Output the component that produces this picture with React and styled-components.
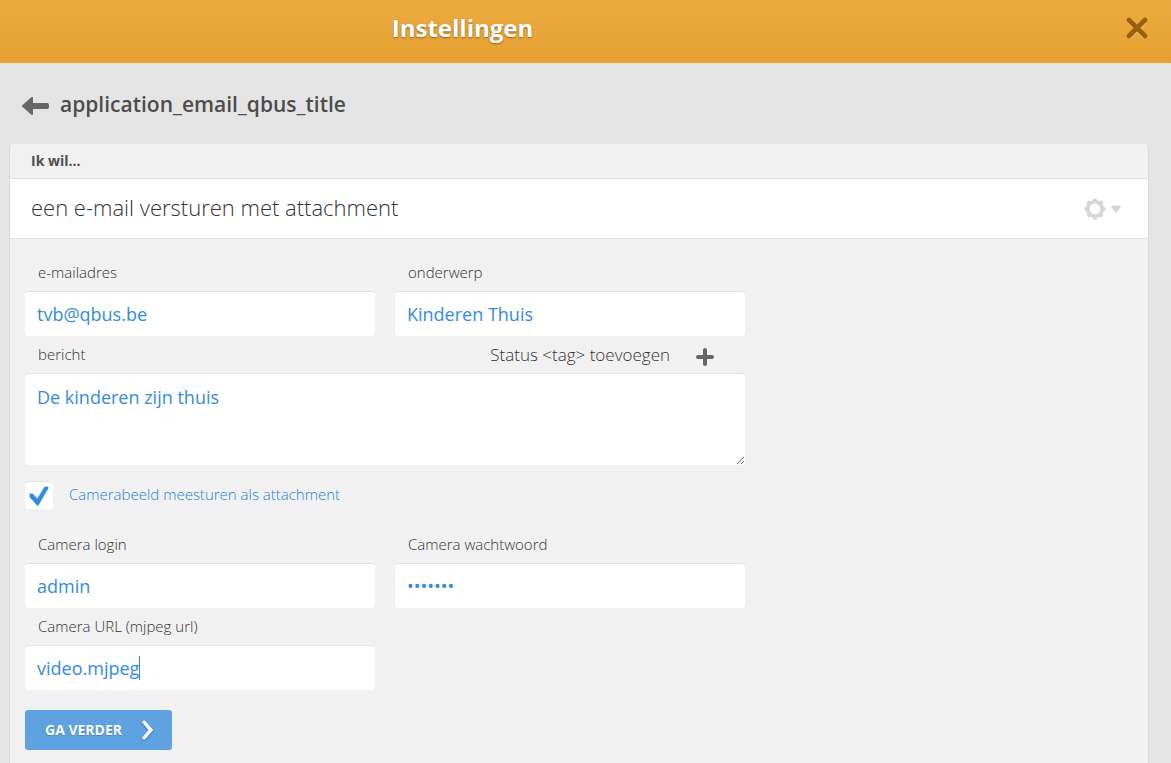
import React, { useState } from "react";
import styled, { createGlobalStyle } from "styled-components";

const GlobalStyle = createGlobalStyle`
  * {
    box-sizing: border-box;
  }

  body {
    margin: 0;
    background: #e4e4e4;
    color: #4d4d4d;
    font-family: "Open Sans", "Noto Sans", sans-serif;
    font-size: 14px;
  }

  button, input, textarea {
    font-family: inherit;
  }
`;

const Page = styled.div`
  display: flex;
  flex-direction: column;
  min-height: 100vh;
`;

const Header = styled.header`
  display: flex;
  align-items: center;
  height: 63px;
  padding-bottom: 8px;
  background: linear-gradient(#ebab42, #e6a02f);
`;

const HeaderTitle = styled.h1`
  flex: 1;
  margin: 0;
  color: #fff;
  font-size: 24px;
  font-weight: 700;
  line-height: 32px;
  text-align: center;
  text-shadow: 0 1px 2px rgba(0, 0, 0, 0.4);
`;

const HeaderActions = styled.div`
  display: flex;
  justify-content: flex-end;
  width: 21%;
  padding-right: 23px;
`;

const IconButton = styled.button`
  display: flex;
  align-items: center;
  gap: ${(props) => props.$gap || "0"};
  padding: 0;
  border: 0;
  background: none;
  color: ${(props) => props.$color || "#666"};
  cursor: pointer;
`;

const TitleBar = styled.div`
  display: flex;
  align-items: center;
  gap: 11px;
  height: 81px;
  padding: 4px 21px 0;
`;

const PageTitle = styled.h2`
  margin: 0;
  padding-bottom: 4px;
  font-size: 21px;
  font-weight: 600;
  line-height: 28px;
`;

const Panel = styled.main`
  flex: 1;
  margin: 0 22px 0 9px;
  border: 1px solid #dadada;
  border-width: 0 1px;
  border-radius: 4px 4px 0 0;
  background: #f1f1f1;
`;

const PanelCaption = styled.div`
  height: 35px;
  padding: 0 21px;
  border-bottom: 1px solid #e0e0e0;
  font-weight: 700;
  line-height: 34px;
`;

const PanelHeading = styled.div`
  display: flex;
  align-items: center;
  justify-content: space-between;
  height: 60px;
  padding: 0 27px 0 21px;
  border-bottom: 1px solid #e0e0e0;
  background: #fff;
`;

const ActionName = styled.h3`
  margin: 0;
  padding-bottom: 4px;
  color: #333;
  font-size: 22px;
  font-weight: 300;
  line-height: 30px;
`;

const Form = styled.form`
  max-width: 750px;
  padding: 15px;
`;

const FieldGrid = styled.div`
  display: grid;
  grid-template-columns: 1fr 1fr;
  column-gap: 20px;
`;

const LabelRow = styled.div`
  display: flex;
  align-items: center;
  justify-content: space-between;
  height: 37px;
  padding: 0 31px 0 13px;
`;

const Label = styled.label`
  padding-bottom: 2px;
  color: #333;
  font-size: 15px;
  font-weight: 300;
  line-height: 20px;
`;

const TagButton = styled(IconButton)`
  color: #333;
  font-size: 17px;
  font-weight: 300;
  line-height: 22px;
`;

const Control = styled.div`
  display: flex;
  align-items: center;
  height: 45px;
  padding: 0 12px;
  border-top: 1px solid #e2e2e2;
  border-radius: 4px;
  background: #fff;
`;

const Input = styled.input`
  flex: ${(props) => (props.$fit ? "none" : "1")};
  field-sizing: ${(props) => (props.$fit ? "content" : "fixed")};
  min-width: 0;
  padding: 0;
  border: 0;
  outline: 0;
  background: none;
  color: #338be0;
  caret-color: ${(props) => (props.$fit ? "transparent" : "auto")};
  font-size: 18px;
  line-height: 26px;
`;

const Caret = styled.span`
  width: 1px;
  height: 24px;
  background: #338be0;
`;

const TextArea = styled.textarea`
  display: block;
  width: 100%;
  height: 92px;
  padding: 10px 12px;
  border: 0;
  border-top: 1px solid #e2e2e2;
  border-radius: 4px;
  outline: 0;
  background: #fff;
  color: #338be0;
  font-size: 18px;
  line-height: 26px;
  resize: both;
`;

const CheckRow = styled.div`
  display: flex;
  align-items: center;
  gap: 16px;
  margin: 16px 0 17px;
`;

const CheckLabel = styled(Label)`
  color: #1f7edb;
`;

const CheckBox = styled.input`
  appearance: none;
  width: 28px;
  height: 28px;
  margin: 0;
  border-top: 1px solid #e2e2e2;
  border-radius: 4px;
  background: #fff;
`;

const CheckFrame = styled.span`
  display: grid;

  > * {
    grid-area: 1 / 1;
    place-self: center;
  }

  svg {
    pointer-events: none;
  }
`;

const SubmitButton = styled.button`
  display: flex;
  align-items: center;
  gap: 19px;
  height: 40px;
  margin-top: 20px;
  padding: 0 19px 2px 20px;
  border: 0;
  border-radius: 3px;
  background: #5fa2e2;
  color: #fff;
  font-size: 14px;
  font-weight: 700;
  text-shadow: 0 1px 1px rgba(0, 0, 0, 0.2);
  cursor: pointer;

  svg {
    filter: drop-shadow(0 1px 1px rgba(0, 0, 0, 0.3));
  }
`;

const CloseIcon = () => (
  <svg width="22" height="22" viewBox="0 0 22 22" fill="none" strokeWidth="4.6">
    <path d="M3 4l16 16M19 4L3 20" stroke="#f3c67c" />
    <path d="M3 3l16 16M19 3l-16 16" stroke="#965f08" strokeLinecap="round" />
  </svg>
);

const BackIcon = () => (
  <svg width="28" height="20" viewBox="0 0 28 20" fill="currentColor">
    <path d="M.6 10L10 1.500q2-1.200 2 .8V7h14q2 0 2 2v2q0 2-2 2H12v4.700q0 2-2 .8z" />
  </svg>
);

// ring with eight short teeth
const GearIcon = () => (
  <svg width="22" height="22" viewBox="0 0 22 22">
    <circle cx="11" cy="11" r="7.200" fill="none" stroke="currentColor" strokeWidth="3.600" />
    {[0, 45, 90, 135, 180, 225, 270, 315].map((angle) => (
      <path
        key={angle}
        d="M8.300 3.500L9.600.5h2.800l1.300 3z"
        fill="currentColor"
        transform={`rotate(${angle} 11 11)`}
      />
    ))}
  </svg>
);

const DropIcon = () => (
  <svg width="10" height="8" viewBox="0 0 10 8" fill="currentColor">
    <path d="M1.500.5h7q1.500.2 1 2L6 7q-1 1-2 0L.5 2.500q-.5-1.800 1-2z" />
  </svg>
);

const PlusIcon = () => (
  <svg width="18" height="22" viewBox="0 0 18 22" fill="none" stroke="#666" strokeWidth="4" strokeLinecap="round">
    <path d="M9 6v14M2 13h14" />
  </svg>
);

const CheckIcon = () => (
  <svg width="20" height="22" viewBox="0 -2 20 22" fill="#338be0">
    <path d="M.5 8.500Q.5 7.500 1.500 7.500H3.500L8.300 12.500 15.200 1.200Q15.800.4 17 .4H18.500Q20 .8 19.400 2.300L10 18.500 9 20 7.500 18.800.5 11z" />
  </svg>
);

const NextIcon = () => (
  <svg width="12" height="22" viewBox="0 -2 12 22" fill="none" stroke="#fff" strokeWidth="3.400">
    <path d="M3 2.200L10 10l-7 7.800" strokeLinecap="round" />
  </svg>
);

function Field({ id, label, type = "text", focused, defaultValue }) {
  return (
    <div>
      <LabelRow>
        <Label htmlFor={id}>{label}</Label>
      </LabelRow>
      <Control>
        <Input id={id} type={type} defaultValue={defaultValue} $fit={focused} autoComplete="off" />
        {focused && <Caret />}
      </Control>
    </div>
  );
}

export default function App() {
  const [attach, setAttach] = useState(true);

  return (
    <>
      <GlobalStyle />
      <Page>
        <Header>
          <HeaderTitle>Instellingen</HeaderTitle>
          <HeaderActions>
            <IconButton type="button" aria-label="Sluiten">
              <CloseIcon />
            </IconButton>
          </HeaderActions>
        </Header>
        <TitleBar>
          <IconButton type="button" aria-label="Terug">
            <BackIcon />
          </IconButton>
          <PageTitle>application_email_qbus_title</PageTitle>
        </TitleBar>
        <Panel>
          <PanelCaption>Ik wil...</PanelCaption>
          <PanelHeading>
            <ActionName>een e-mail versturen met attachment</ActionName>
            <IconButton type="button" aria-label="Opties" $color="#d5d5d5" $gap="5px">
              <GearIcon />
              <DropIcon />
            </IconButton>
          </PanelHeading>
          <Form onSubmit={(e) => e.preventDefault()}>
            <FieldGrid>
              <Field id="email" label="e-mailadres" defaultValue="tvb@qbus.be" />
              <Field id="subject" label="onderwerp" defaultValue="Kinderen Thuis" />
            </FieldGrid>
            <LabelRow>
              <Label htmlFor="message">bericht</Label>
              <TagButton type="button" $gap="26px">
                Status &lt;tag&gt; toevoegen
                <PlusIcon />
              </TagButton>
            </LabelRow>
            <TextArea id="message" defaultValue="De kinderen zijn thuis" spellCheck={false} />
            <CheckRow>
              <CheckFrame>
                <CheckBox
                  id="attach"
                  type="checkbox"
                  checked={attach}
                  onChange={(e) => setAttach(e.target.checked)}
                />
                {attach && <CheckIcon />}
              </CheckFrame>
              <CheckLabel htmlFor="attach">Camerabeeld meesturen als attachment</CheckLabel>
            </CheckRow>
            <FieldGrid>
              <Field id="login" label="Camera login" defaultValue="admin" />
              <Field id="password" label="Camera wachtwoord" type="password" defaultValue="1234567" />
              <Field id="url" label="Camera URL (mjpeg url)" defaultValue="video.mjpeg" focused />
            </FieldGrid>
            <SubmitButton type="submit">
              GA VERDER
              <NextIcon />
            </SubmitButton>
          </Form>
        </Panel>
      </Page>
    </>
  );
}
